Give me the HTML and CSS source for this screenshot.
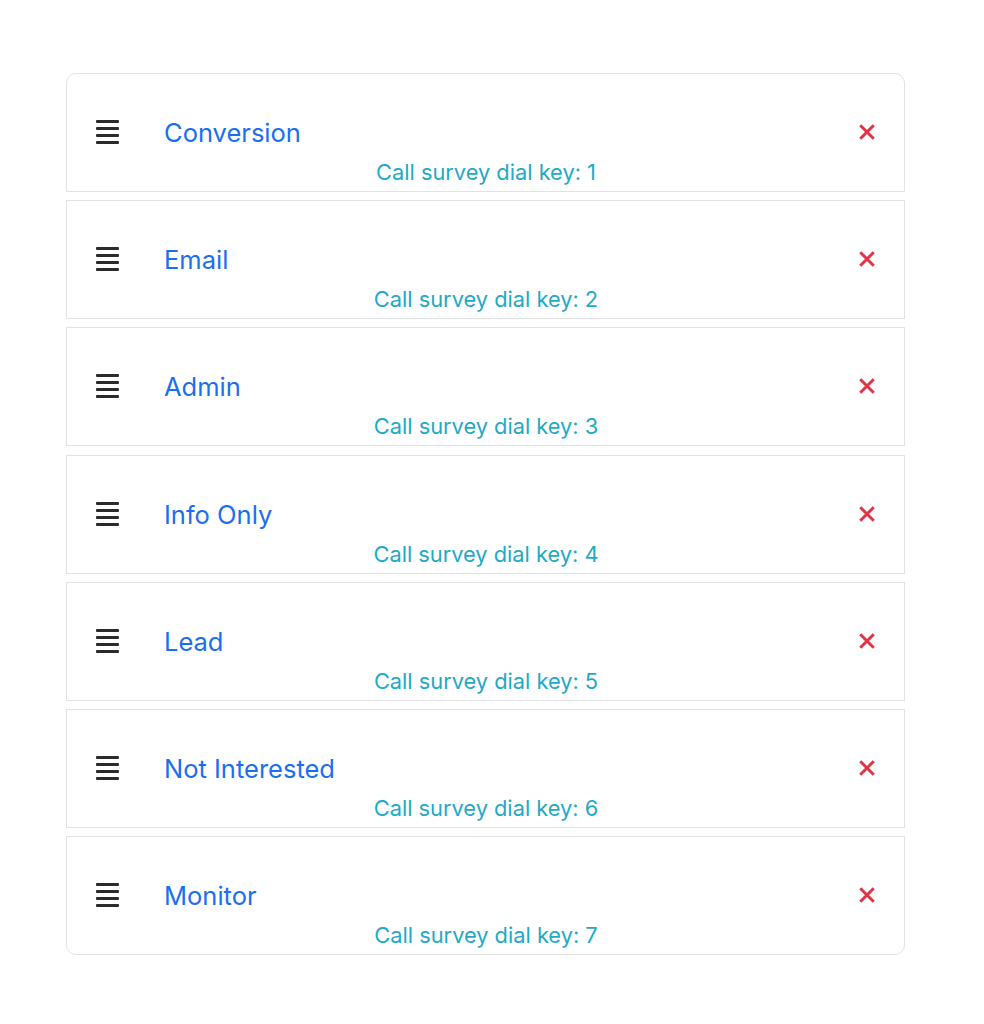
FILE: index.html
```html
<!DOCTYPE html>
<html>

<head>
    <meta charset="utf-8" />
    <title>Call survey dispositions</title>
    <link rel="stylesheet" href="styles.css">
</head>

<body>
    <!-- 列表 -->
    <ul class="survey_list">
        <li class="survey_item">
            <div class="item_row">
                <span class="drag_handle"><i></i><i></i><i></i><i></i></span>
                <span class="item_title">Conversion</span>
                <svg class="item_remove" viewBox="0 0 16 16"><path d="M2 2L14 14M14 2L2 14" /></svg>
            </div>
            <div class="item_key">Call survey dial key: 1</div>
        </li>
        <li class="survey_item">
            <div class="item_row">
                <span class="drag_handle"><i></i><i></i><i></i><i></i></span>
                <span class="item_title">Email</span>
                <svg class="item_remove" viewBox="0 0 16 16"><path d="M2 2L14 14M14 2L2 14" /></svg>
            </div>
            <div class="item_key">Call survey dial key: 2</div>
        </li>
        <li class="survey_item">
            <div class="item_row">
                <span class="drag_handle"><i></i><i></i><i></i><i></i></span>
                <span class="item_title">Admin</span>
                <svg class="item_remove" viewBox="0 0 16 16"><path d="M2 2L14 14M14 2L2 14" /></svg>
            </div>
            <div class="item_key">Call survey dial key: 3</div>
        </li>
        <li class="survey_item">
            <div class="item_row">
                <span class="drag_handle"><i></i><i></i><i></i><i></i></span>
                <span class="item_title">Info Only</span>
                <svg class="item_remove" viewBox="0 0 16 16"><path d="M2 2L14 14M14 2L2 14" /></svg>
            </div>
            <div class="item_key">Call survey dial key: 4</div>
        </li>
        <li class="survey_item">
            <div class="item_row">
                <span class="drag_handle"><i></i><i></i><i></i><i></i></span>
                <span class="item_title">Lead</span>
                <svg class="item_remove" viewBox="0 0 16 16"><path d="M2 2L14 14M14 2L2 14" /></svg>
            </div>
            <div class="item_key">Call survey dial key: 5</div>
        </li>
        <li class="survey_item">
            <div class="item_row">
                <span class="drag_handle"><i></i><i></i><i></i><i></i></span>
                <span class="item_title">Not Interested</span>
                <svg class="item_remove" viewBox="0 0 16 16"><path d="M2 2L14 14M14 2L2 14" /></svg>
            </div>
            <div class="item_key">Call survey dial key: 6</div>
        </li>
        <li class="survey_item">
            <div class="item_row">
                <span class="drag_handle"><i></i><i></i><i></i><i></i></span>
                <span class="item_title">Monitor</span>
                <svg class="item_remove" viewBox="0 0 16 16"><path d="M2 2L14 14M14 2L2 14" /></svg>
            </div>
            <div class="item_key">Call survey dial key: 7</div>
        </li>
    </ul>
</body>

</html>
```

FILE: styles.css
```css
* {
    margin: 0;
    padding: 0;
    box-sizing: border-box;
}

body {
    background: #fff;
    font-family: Inter, "Liberation Sans", sans-serif;
    padding: 73px 0 0 66px;
}

li {
    list-style: none;
}

.survey_list {
    width: 839px;
    display: flex;
    flex-direction: column;
    gap: 8px;
}

.survey_item {
    height: 119px;
    border: 1px solid #e2e2e2;
    padding: 43px 28px 0 29px;
}

.survey_item:nth-child(3) {
    margin-bottom: 1px;
}

.survey_item:first-child {
    border-radius: 10px 10px 0 0;
}

.survey_item:last-child {
    border-radius: 0 0 10px 10px;
}

.item_row {
    display: flex;
    align-items: center;
    height: 30px;
}

.drag_handle {
    width: 23px;
    display: flex;
    flex-direction: column;
    gap: 4px;
    margin-right: 45px;
}

.drag_handle i {
    display: block;
    height: 3px;
    border-radius: 1px;
    background: #2b2b2b;
}

.item_title {
    flex: 1;
    font-size: 25.5px;
    color: #1a6ff0;
}

.item_remove {
    width: 18px;
    height: 18px;
    stroke: #e03444;
    stroke-width: 2.6;
    fill: none;
}

.item_key {
    margin-top: 11px;
    text-align: center;
    font-size: 21.8px;
    line-height: 28px;
    color: #1faac6;
}
```
